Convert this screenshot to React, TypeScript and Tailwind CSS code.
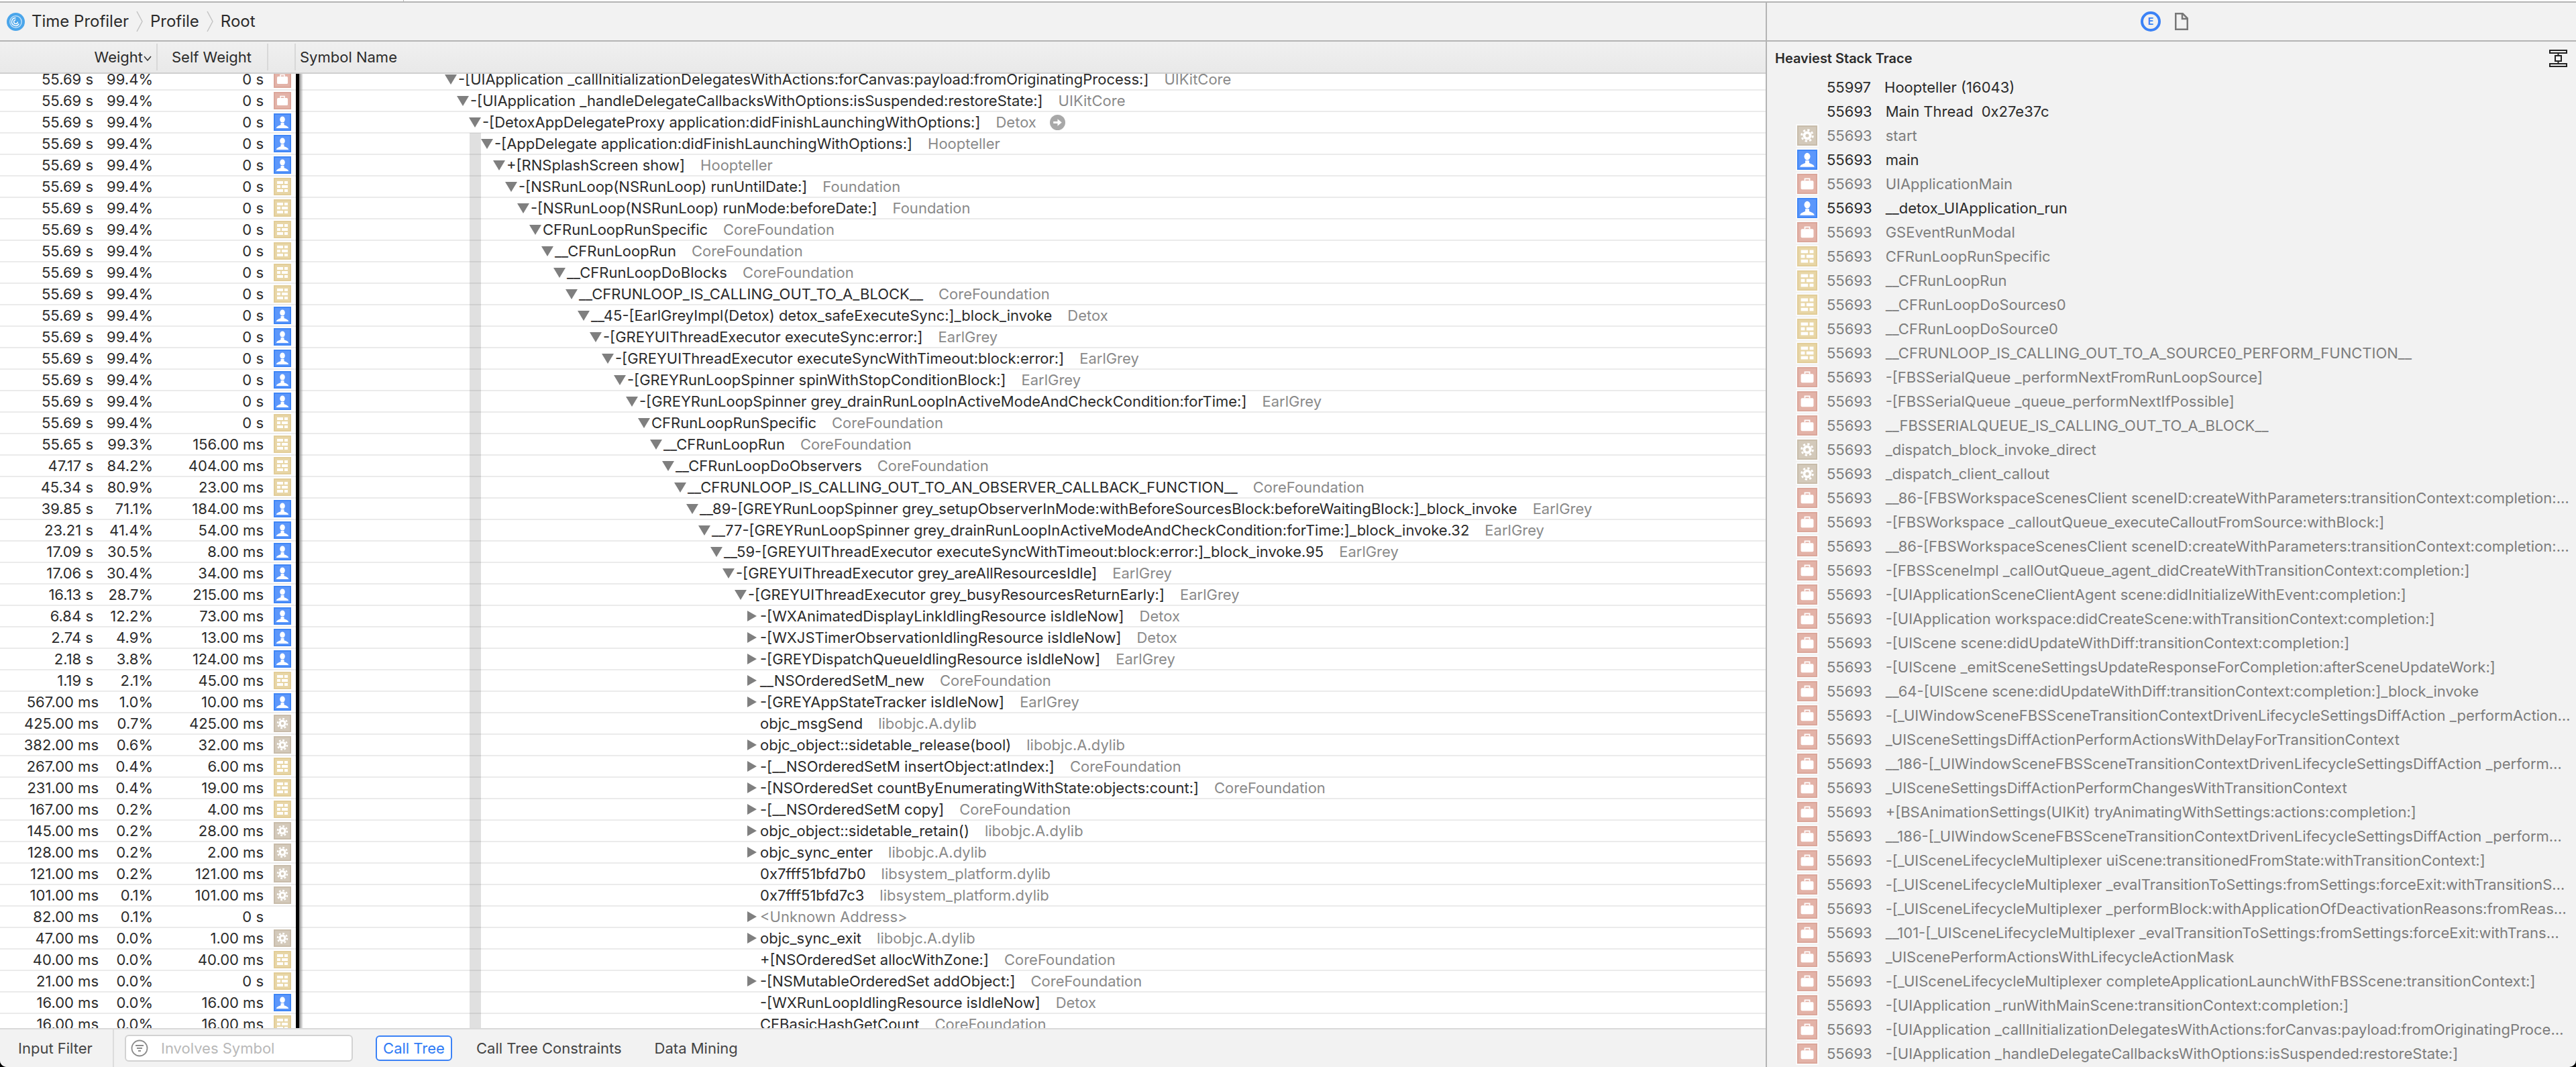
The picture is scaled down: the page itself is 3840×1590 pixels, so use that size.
import React from "react"

type Kind = "brief" | "user" | "tan" | "gear" | "none"
type Tri = "d" | "r" | "n"

const S = "55.69 s"

// weight, percent, self, icon, depth, triangle, symbol, library
const rows: [string, string, string, Kind, number, Tri, string, string][] = [
  [S, "99.4%", "0 s", "brief", 0, "d", "-[UIApplication _callInitializationDelegatesWithActions:forCanvas:payload:fromOriginatingProcess:]", "UIKitCore"],
  [S, "99.4%", "0 s", "brief", 1, "d", "-[UIApplication _handleDelegateCallbacksWithOptions:isSuspended:restoreState:]", "UIKitCore"],
  [S, "99.4%", "0 s", "user", 2, "d", "-[DetoxAppDelegateProxy application:didFinishLaunchingWithOptions:]", "Detox"],
  [S, "99.4%", "0 s", "user", 3, "d", "-[AppDelegate application:didFinishLaunchingWithOptions:]", "Hoopteller"],
  [S, "99.4%", "0 s", "user", 4, "d", "+[RNSplashScreen show]", "Hoopteller"],
  [S, "99.4%", "0 s", "tan", 5, "d", "-[NSRunLoop(NSRunLoop) runUntilDate:]", "Foundation"],
  [S, "99.4%", "0 s", "tan", 6, "d", "-[NSRunLoop(NSRunLoop) runMode:beforeDate:]", "Foundation"],
  [S, "99.4%", "0 s", "tan", 7, "d", "CFRunLoopRunSpecific", "CoreFoundation"],
  [S, "99.4%", "0 s", "tan", 8, "d", "__CFRunLoopRun", "CoreFoundation"],
  [S, "99.4%", "0 s", "tan", 9, "d", "__CFRunLoopDoBlocks", "CoreFoundation"],
  [S, "99.4%", "0 s", "tan", 10, "d", "__CFRUNLOOP_IS_CALLING_OUT_TO_A_BLOCK__", "CoreFoundation"],
  [S, "99.4%", "0 s", "user", 11, "d", "__45-[EarlGreyImpl(Detox) detox_safeExecuteSync:]_block_invoke", "Detox"],
  [S, "99.4%", "0 s", "user", 12, "d", "-[GREYUIThreadExecutor executeSync:error:]", "EarlGrey"],
  [S, "99.4%", "0 s", "user", 13, "d", "-[GREYUIThreadExecutor executeSyncWithTimeout:block:error:]", "EarlGrey"],
  [S, "99.4%", "0 s", "user", 14, "d", "-[GREYRunLoopSpinner spinWithStopConditionBlock:]", "EarlGrey"],
  [S, "99.4%", "0 s", "user", 15, "d", "-[GREYRunLoopSpinner grey_drainRunLoopInActiveModeAndCheckCondition:forTime:]", "EarlGrey"],
  [S, "99.4%", "0 s", "tan", 16, "d", "CFRunLoopRunSpecific", "CoreFoundation"],
  ["55.65 s", "99.3%", "156.00 ms", "tan", 17, "d", "__CFRunLoopRun", "CoreFoundation"],
  ["47.17 s", "84.2%", "404.00 ms", "tan", 18, "d", "__CFRunLoopDoObservers", "CoreFoundation"],
  ["45.34 s", "80.9%", "23.00 ms", "tan", 19, "d", "__CFRUNLOOP_IS_CALLING_OUT_TO_AN_OBSERVER_CALLBACK_FUNCTION__", "CoreFoundation"],
  ["39.85 s", "71.1%", "184.00 ms", "user", 20, "d", "__89-[GREYRunLoopSpinner grey_setupObserverInMode:withBeforeSourcesBlock:beforeWaitingBlock:]_block_invoke", "EarlGrey"],
  ["23.21 s", "41.4%", "54.00 ms", "user", 21, "d", "__77-[GREYRunLoopSpinner grey_drainRunLoopInActiveModeAndCheckCondition:forTime:]_block_invoke.32", "EarlGrey"],
  ["17.09 s", "30.5%", "8.00 ms", "user", 22, "d", "__59-[GREYUIThreadExecutor executeSyncWithTimeout:block:error:]_block_invoke.95", "EarlGrey"],
  ["17.06 s", "30.4%", "34.00 ms", "user", 23, "d", "-[GREYUIThreadExecutor grey_areAllResourcesIdle]", "EarlGrey"],
  ["16.13 s", "28.7%", "215.00 ms", "user", 24, "d", "-[GREYUIThreadExecutor grey_busyResourcesReturnEarly:]", "EarlGrey"],
  ["6.84 s", "12.2%", "73.00 ms", "user", 25, "r", "-[WXAnimatedDisplayLinkIdlingResource isIdleNow]", "Detox"],
  ["2.74 s", "4.9%", "13.00 ms", "user", 25, "r", "-[WXJSTimerObservationIdlingResource isIdleNow]", "Detox"],
  ["2.18 s", "3.8%", "124.00 ms", "user", 25, "r", "-[GREYDispatchQueueIdlingResource isIdleNow]", "EarlGrey"],
  ["1.19 s", "2.1%", "45.00 ms", "tan", 25, "r", "__NSOrderedSetM_new", "CoreFoundation"],
  ["567.00 ms", "1.0%", "10.00 ms", "user", 25, "r", "-[GREYAppStateTracker isIdleNow]", "EarlGrey"],
  ["425.00 ms", "0.7%", "425.00 ms", "gear", 25, "n", "objc_msgSend", "libobjc.A.dylib"],
  ["382.00 ms", "0.6%", "32.00 ms", "gear", 25, "r", "objc_object::sidetable_release(bool)", "libobjc.A.dylib"],
  ["267.00 ms", "0.4%", "6.00 ms", "tan", 25, "r", "-[__NSOrderedSetM insertObject:atIndex:]", "CoreFoundation"],
  ["231.00 ms", "0.4%", "19.00 ms", "tan", 25, "r", "-[NSOrderedSet countByEnumeratingWithState:objects:count:]", "CoreFoundation"],
  ["167.00 ms", "0.2%", "4.00 ms", "tan", 25, "r", "-[__NSOrderedSetM copy]", "CoreFoundation"],
  ["145.00 ms", "0.2%", "28.00 ms", "gear", 25, "r", "objc_object::sidetable_retain()", "libobjc.A.dylib"],
  ["128.00 ms", "0.2%", "2.00 ms", "gear", 25, "r", "objc_sync_enter", "libobjc.A.dylib"],
  ["121.00 ms", "0.2%", "121.00 ms", "gear", 25, "n", "0x7fff51bfd7b0", "libsystem_platform.dylib"],
  ["101.00 ms", "0.1%", "101.00 ms", "gear", 25, "n", "0x7fff51bfd7c3", "libsystem_platform.dylib"],
  ["82.00 ms", "0.1%", "0 s", "none", 25, "r", "<Unknown Address>", ""],
  ["47.00 ms", "0.0%", "1.00 ms", "gear", 25, "r", "objc_sync_exit", "libobjc.A.dylib"],
  ["40.00 ms", "0.0%", "40.00 ms", "tan", 25, "n", "+[NSOrderedSet allocWithZone:]", "CoreFoundation"],
  ["21.00 ms", "0.0%", "0 s", "tan", 25, "r", "-[NSMutableOrderedSet addObject:]", "CoreFoundation"],
  ["16.00 ms", "0.0%", "16.00 ms", "user", 25, "n", "-[WXRunLoopIdlingResource isIdleNow]", "Detox"],
  ["16.00 ms", "0.0%", "16.00 ms", "tan", 25, "n", "CFBasicHashGetCount", "CoreFoundation"],
]

const stack: [Kind, string][] = [
  ["gear", "start"],
  ["user", "main"],
  ["brief", "UIApplicationMain"],
  ["user", "__detox_UIApplication_run"],
  ["brief", "GSEventRunModal"],
  ["tan", "CFRunLoopRunSpecific"],
  ["tan", "__CFRunLoopRun"],
  ["tan", "__CFRunLoopDoSources0"],
  ["tan", "__CFRunLoopDoSource0"],
  ["tan", "__CFRUNLOOP_IS_CALLING_OUT_TO_A_SOURCE0_PERFORM_FUNCTION__"],
  ["brief", "-[FBSSerialQueue _performNextFromRunLoopSource]"],
  ["brief", "-[FBSSerialQueue _queue_performNextIfPossible]"],
  ["brief", "__FBSSERIALQUEUE_IS_CALLING_OUT_TO_A_BLOCK__"],
  ["gear", "_dispatch_block_invoke_direct"],
  ["gear", "_dispatch_client_callout"],
  ["brief", "__86-[FBSWorkspaceScenesClient sceneID:createWithParameters:transitionContext:completion:…"],
  ["brief", "-[FBSWorkspace _calloutQueue_executeCalloutFromSource:withBlock:]"],
  ["brief", "__86-[FBSWorkspaceScenesClient sceneID:createWithParameters:transitionContext:completion:…"],
  ["brief", "-[FBSSceneImpl _callOutQueue_agent_didCreateWithTransitionContext:completion:]"],
  ["brief", "-[UIApplicationSceneClientAgent scene:didInitializeWithEvent:completion:]"],
  ["brief", "-[UIApplication workspace:didCreateScene:withTransitionContext:completion:]"],
  ["brief", "-[UIScene scene:didUpdateWithDiff:transitionContext:completion:]"],
  ["brief", "-[UIScene _emitSceneSettingsUpdateResponseForCompletion:afterSceneUpdateWork:]"],
  ["brief", "__64-[UIScene scene:didUpdateWithDiff:transitionContext:completion:]_block_invoke"],
  ["brief", "-[_UIWindowSceneFBSSceneTransitionContextDrivenLifecycleSettingsDiffAction _performAction…"],
  ["brief", "_UISceneSettingsDiffActionPerformActionsWithDelayForTransitionContext"],
  ["brief", "__186-[_UIWindowSceneFBSSceneTransitionContextDrivenLifecycleSettingsDiffAction _perform…"],
  ["brief", "_UISceneSettingsDiffActionPerformChangesWithTransitionContext"],
  ["brief", "+[BSAnimationSettings(UIKit) tryAnimatingWithSettings:actions:completion:]"],
  ["brief", "__186-[_UIWindowSceneFBSSceneTransitionContextDrivenLifecycleSettingsDiffAction _perform…"],
  ["brief", "-[_UISceneLifecycleMultiplexer uiScene:transitionedFromState:withTransitionContext:]"],
  ["brief", "-[_UISceneLifecycleMultiplexer _evalTransitionToSettings:fromSettings:forceExit:withTransitionS…"],
  ["brief", "-[_UISceneLifecycleMultiplexer _performBlock:withApplicationOfDeactivationReasons:fromReas…"],
  ["brief", "__101-[_UISceneLifecycleMultiplexer _evalTransitionToSettings:fromSettings:forceExit:withTrans…"],
  ["brief", "_UIScenePerformActionsWithLifecycleActionMask"],
  ["brief", "-[_UISceneLifecycleMultiplexer completeApplicationLaunchWithFBSScene:transitionContext:]"],
  ["brief", "-[UIApplication _runWithMainScene:transitionContext:completion:]"],
  ["brief", "-[UIApplication _callInitializationDelegatesWithActions:forCanvas:payload:fromOriginatingProce…"],
  ["brief", "-[UIApplication _handleDelegateCallbacksWithOptions:isSuspended:restoreState:]"],
]

function SymbolIcon({ kind, big }: { kind: Kind; big?: boolean }) {
  const size = big ? "w-[30px] h-[30px]" : "w-[26px] h-[26px]"
  if (kind === "none") return <div className={size} />
  const box = {
    brief: "bg-[#e3b3a8] border-[#dba69a]",
    user: "bg-[#5c97fb] border-[#3f86f6]",
    tan: "bg-[#e8d6a6] border-[#e2cd98]",
    gear: "bg-[#d3c9ba] border-[#c8bcaa]",
  }[kind]
  return (
    <div className={`${size} ${box} border-2 shrink-0 flex items-center justify-center`}>
      <svg viewBox="0 0 22 22" className="w-full h-full" fill="white">
        {kind === "brief" && (
          <>
            <rect x="3" y="7" width="16" height="11" rx="1.5" />
            <path d="M8 7V4.5h6V7" fill="none" stroke="white" strokeWidth="1.5" />
          </>
        )}
        {kind === "user" && (
          <>
            <ellipse cx="11" cy="7" rx="3.8" ry="4.6" />
            <path d="M2 20c0-3 5-3.800 6.500-5v-3h5v3c1.500 1.200 6.500 2 6.500 5z" />
          </>
        )}
        {kind === "tan" && (
          <>
            <rect x="3" y="3" width="9" height="4" />
            <rect x="14" y="3" width="5" height="4" />
            <rect x="3" y="9" width="5" height="4" />
            <rect x="10" y="9" width="9" height="4" />
            <rect x="3" y="15" width="9" height="4" />
            <rect x="14" y="15" width="5" height="4" />
          </>
        )}
        {kind === "gear" && (
          <>
            <circle cx="11" cy="11" r="5.5" />
            <circle cx="11" cy="11" r="7" fill="none" stroke="white" strokeWidth="2.500" strokeDasharray="2.750 2.750" />
            <circle cx="11" cy="11" r="2.200" fill="#d3c9ba" />
          </>
        )}
      </svg>
    </div>
  )
}

function Triangle({ dir }: { dir: Tri }) {
  if (dir === "n") return <div className="w-[18px] shrink-0" />
  return (
    <svg viewBox="0 0 18 18" className="w-[18px] h-[18px] shrink-0" fill="#7f7f7f">
      {dir === "d" ? <path d="M0 2h18L9 17z" /> : <path d="M1 1l14 8-14 8z" />}
    </svg>
  )
}

function Row({ row }: { row: (typeof rows)[number] }) {
  const [weight, pct, self, icon, depth, tri, symbol, lib] = row
  const seconds = !weight.endsWith("ms")
  return (
    <div className="flex items-center h-8 shrink-0 border-b-2 border-[#ebebeb] bg-white text-[#2b2b2b]">
      <div className={`w-[147px] text-right shrink-0 ${seconds ? "pr-[8px]" : ""}`}>{weight}</div>
      <div className="w-[81px] text-right shrink-0">{pct}</div>
      <div className="w-[165px] text-right shrink-0">{self}</div>
      <div className="ml-[15px] w-[26px] shrink-0">
        <SymbolIcon kind={icon} />
      </div>
      {/* tree indent comes from the data */}
      <div className="flex items-center whitespace-nowrap ml-[229px]" style={{ paddingLeft: depth * 18 }}>
        <Triangle dir={tri} />
        <span className={`ml-[2px] ${lib ? "" : "text-[#8a8a8a]"}`}>{symbol}</span>
        {lib && <span className="ml-[23px] text-[#8a8a8a]">{lib}</span>}
        {lib === "Detox" && depth === 2 && (
          <svg viewBox="0 0 22 22" className="ml-[20px] w-[23px] h-[23px]">
            <circle cx="11" cy="11" r="11" fill="#a8a8a8" />
            <path d="M5 9.500h6V6l6 5-6 5v-3.500H5z" fill="white" />
          </svg>
        )}
      </div>
    </div>
  )
}

function Chevron() {
  return (
    <svg viewBox="0 0 10 32" className="w-[10px] h-[32px] mx-[11px]" fill="none" stroke="#c4c4c4" strokeWidth="1.500">
      <path d="M1 1l8 15-8 15" />
    </svg>
  )
}

export default function App() {
  return (
    <div className="w-[3840px] h-[1590px] bg-black">
      <div className="h-full rounded-b-[10px] overflow-hidden flex flex-col bg-[#f2f2f2] text-[22px] font-[Inter,sans-serif] text-[#2b2b2b]">
        <div className="relative h-[4px] shrink-0 border-b-[2px] border-[#b4b4b4] bg-white">
          <div className="absolute left-[601px] top-0 w-[1px] h-[2px] bg-[#b4b4b4]" />
        </div>
        <div className="flex flex-1 min-h-0">
          {/* left: call tree */}
          <div className="w-[2632px] shrink-0 flex flex-col">
            <div className="h-[58px] shrink-0 flex items-center pl-[10px] border-b-2 border-[#b4b4b4] text-[24px]">
              <svg viewBox="0 0 28 28" className="w-[27px] h-[27px] mr-[10px]">
                <circle cx="14" cy="14" r="14" fill="#4aa5ea" />
                <circle cx="14" cy="14" r="9" fill="none" stroke="#bfe0f8" strokeWidth="1.500" />
                <path d="M14 8a6 6 0 1 0 5 9M14 11a3 3 0 1 0 3 3" fill="none" stroke="white" strokeWidth="1.500" />
              </svg>
              <span>Time Profiler</span>
              <Chevron />
              <span>Profile</span>
              <Chevron />
              <span>Root</span>
            </div>
            <div className="h-[48px] shrink-0 flex items-center bg-gradient-to-b from-[#f0f0f0] to-[#e9e9e9] border-b-2 border-[#cfcfcf]">
              <div className="w-[235px] shrink-0 flex justify-end items-center pr-[7px] h-[40px] border-r-2 border-[#d8d8d8]">
                <span>Weight</span>
                <svg viewBox="0 0 12 8" className="w-[12px] h-[8px] ml-[1px] mt-[3px]" fill="none" stroke="#333" strokeWidth="1.500">
                  <path d="M1 1l5 6 5-6" />
                </svg>
              </div>
              <div className="w-[165px] shrink-0 pl-[21px] h-[40px] flex items-center border-r-2 border-[#d8d8d8]">Self Weight</div>
              <div className="w-[41px] shrink-0 h-[40px] border-r-2 border-[#d8d8d8]" />
              <div className="pl-[6px]">Symbol Name</div>
            </div>
            <div className="relative flex-1 min-h-0 overflow-hidden bg-white">
              <div className="flex flex-col -mt-[7px]">
                {rows.map((row, i) => (
                  <Row key={i} row={row} />
                ))}
              </div>
              {/* selection guide and column edge lie over the rows */}
              <div className="absolute left-[700px] top-[88px] bottom-0 w-[17px] bg-[#555555]/[0.18]" />
              <div className="absolute left-[441px] top-0 bottom-0 w-[5px] bg-black" />
              <div className="absolute left-[446px] top-0 bottom-0 w-[6px] bg-gradient-to-r from-[#8a8a8a] to-transparent" />
            </div>
            <div className="h-[58px] shrink-0 flex items-center border-t-2 border-[#dadada] bg-[#f2f2f2]">
              <div className="w-[170px] h-full flex items-center pl-[27px] text-[#444] border-r-2 border-[#dcdcdc] shrink-0">Input Filter</div>
              <div className="ml-[16px] w-[340px] h-[40px] rounded-[6px] border-2 border-[#d2d2d2] bg-white flex items-center pl-[7px] shrink-0">
                <svg viewBox="0 0 26 26" className="w-[26px] h-[26px]" fill="none" stroke="#8c8c8c" strokeWidth="1.800">
                  <circle cx="13" cy="13" r="11.500" />
                  <path d="M7 9h12M9 13h8M11 17h4" />
                </svg>
                <span className="ml-[19px] text-[#b9b9b9]">Involves Symbol</span>
              </div>
              <div className="ml-[34px] w-[114px] h-[38px] rounded-[6px] border-2 border-[#3b82f6] bg-white flex items-center justify-center text-[#2f7bf5] shrink-0">Call Tree</div>
              <div className="ml-[36px] text-[#444] whitespace-nowrap">Call Tree Constraints</div>
              <div className="ml-[49px] text-[#444] whitespace-nowrap">Data Mining</div>
            </div>
          </div>

          {/* right: heaviest stack trace */}
          <div className="flex-1 min-w-0 flex flex-col border-l-2 border-[#b4b4b4]">
            <div className="h-[58px] shrink-0 flex items-center border-b-2 border-[#b4b4b4]">
              <div className="ml-[557px] w-[30px] h-[30px] rounded-full border-[4px] border-[#3b82f6] flex items-center justify-center text-[14px] font-bold text-[#3b82f6] leading-none">E</div>
              <svg viewBox="0 0 20 26" className="ml-[21px] w-[20px] h-[26px]" fill="none" stroke="#777" strokeWidth="2.500">
                <path d="M1.250 1.250h10.500l7 7v16.500H1.250zM11 1.250V9h7.750" />
              </svg>
            </div>
            <div className="h-[50px] shrink-0 flex items-center justify-between pl-[12px] pr-[13px]">
              <span className="font-semibold text-[20px]">Heaviest Stack Trace</span>
              <svg viewBox="0 0 27 26" className="w-[27px] h-[26px]" fill="none" stroke="#222" strokeWidth="2">
                <rect x="1" y="1" width="25" height="4" />
                <rect x="1" y="21" width="25" height="4" />
                <rect x="9" y="9" width="9" height="8" />
                <path d="M13.500 5v4M13.500 17v4" />
              </svg>
            </div>
            <div className="flex flex-col min-h-0 overflow-hidden">
              <div className="h-9 shrink-0 flex items-center pl-[89px]">
                <span>55997</span>
                <span className="ml-[20px] whitespace-nowrap">Hoopteller (16043)</span>
              </div>
              <div className="h-9 shrink-0 flex items-center pl-[89px]">
                <span>55693</span>
                <span className="ml-[20px] whitespace-nowrap">Main Thread&nbsp; 0x27e37c</span>
              </div>
              {stack.map(([kind, name], i) => (
                <div key={i} className={`h-9 shrink-0 flex items-center pl-[45px] ${kind === "user" ? "text-[#2b2b2b]" : "text-[#7d7d7d]"}`}>
                  <div className="border-2 border-[#fafafa] -ml-[2px]">
                    <SymbolIcon kind={kind} big />
                  </div>
                  <span className="ml-[12px]">55693</span>
                  <span className="ml-[20px] whitespace-nowrap">{name}</span>
                </div>
              ))}
            </div>
          </div>
        </div>
      </div>
    </div>
  )
}
